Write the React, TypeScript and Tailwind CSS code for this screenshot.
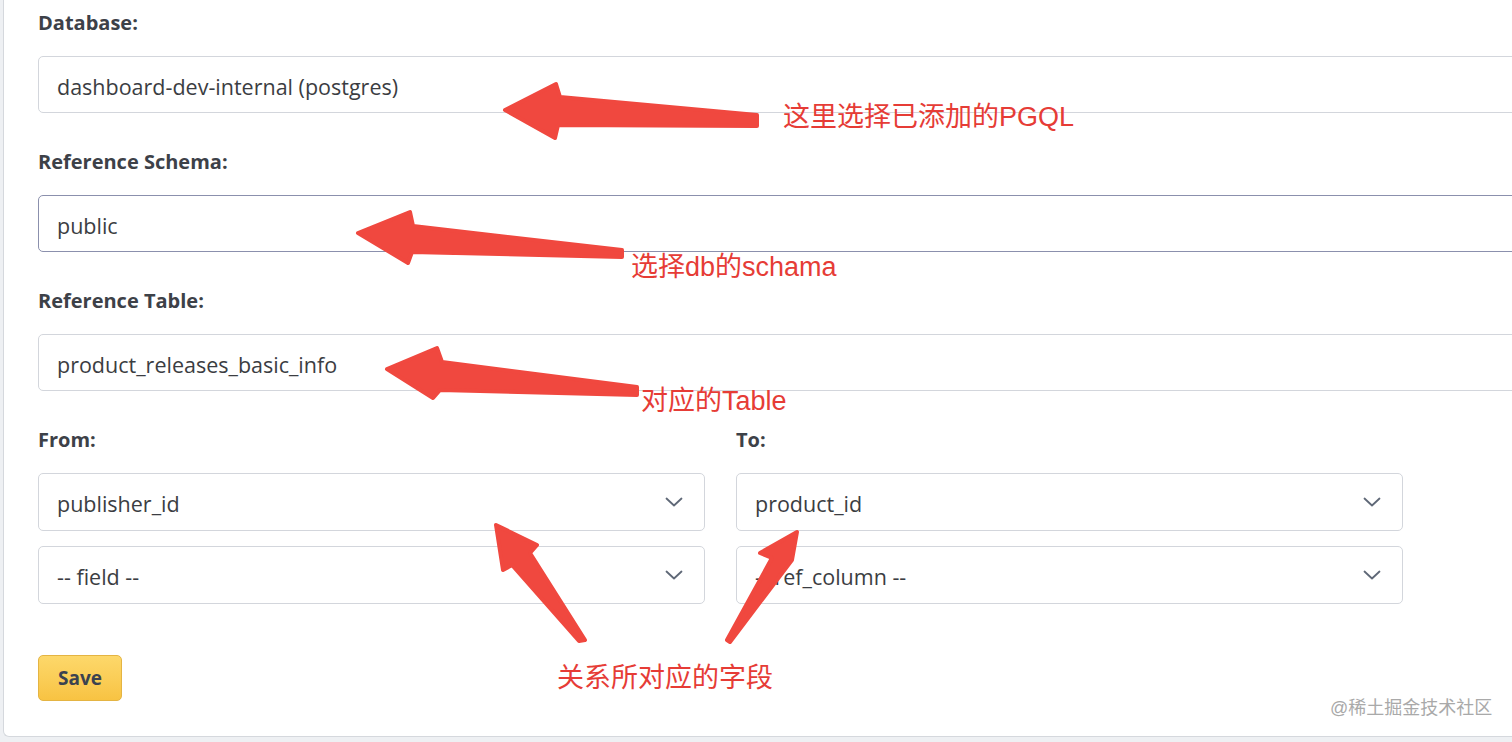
const formFont = { fontFamily: '"Open Sans", "Noto Sans", sans-serif' };

function Chevron() {
  return (
    <svg width="18" height="10" viewBox="0 0 18 10" fill="none" className="shrink-0">
      <polyline points="1.5,1.5 9,8.5 16.5,1.5" stroke="#5f6877" strokeWidth="1.8" strokeLinecap="round" strokeLinejoin="round" />
    </svg>
  );
}

function Label({ children }: { children: React.ReactNode }) {
  return <div className="h-[28px] text-[20px] leading-[28px] font-bold text-[#3d4148]">{children}</div>;
}

function TextInput({ value, focused }: { value: string; focused?: boolean }) {
  return (
    <div
      className={`mt-[19px] h-[57px] w-[1500px] rounded-[5px] bg-white flex items-center pl-[18px] pt-[5px] text-[21.5px] text-[#3b3d42] border ${
        focused ? 'border-[#8b90ad]' : 'border-[#d3d6dc]'
      }`}
    >
      {value}
    </div>
  );
}

function Select({ value }: { value: string }) {
  return (
    <div className="h-[58px] w-[667px] rounded-[5px] border border-[#d3d6dc] bg-white flex items-center justify-between pl-[18px] pr-[21px] text-[21.5px] text-[#3b3d42]">
      <span className="pt-[4px]">{value}</span>
      <Chevron />
    </div>
  );
}

const arrows = [
  '505,110 556,84 560,97 757,115 757,126 558,125 555,138',
  '358,233 410,212 413,226 622,250 622,257 412,252 408,263',
  '387,369 437,348 442,362 637,387 637,395 440,390 433,398',
  '496,525 537,545 530,553 585,640 579,641 512,565 503,570',
  '797,532 792,560 730,642 727,640 772,558 760,553',
];

const notes = [
  { text: '这里选择已添加的PGQL', left: 783, top: 104 },
  { text: '选择db的schama', left: 631, top: 254 },
  { text: '对应的Table', left: 641, top: 388 },
  { text: '关系所对应的字段', left: 557, top: 665 },
];

export default function App() {
  return (
    <div className="relative h-[742px] w-[1512px] overflow-hidden bg-[#eef0f3]" style={formFont}>
      <div className="ml-[3px] h-[737px] w-[1560px] bg-white border-l border-b border-[#d5d8dd] rounded-bl-[6px] pl-[34px] pt-[9px]">
        <Label>Database:</Label>
        <TextInput value="dashboard-dev-internal (postgres)" />

        <div className="mt-[35px]">
          <Label>Reference Schema:</Label>
          <TextInput value="public" focused />
        </div>

        <div className="mt-[35px]">
          <Label>Reference Table:</Label>
          <TextInput value="product_releases_basic_info" />
        </div>

        <div className="mt-[35px] flex gap-[31px]">
          <div>
            <Label>From:</Label>
            <div className="mt-[19px] flex flex-col gap-[15px]">
              <Select value="publisher_id" />
              <Select value="-- field --" />
            </div>
          </div>
          <div>
            <Label>To:</Label>
            <div className="mt-[19px] flex flex-col gap-[15px]">
              <Select value="product_id" />
              <Select value="-- ref_column --" />
            </div>
          </div>
        </div>

        <button className="mt-[51px] h-[46px] w-[84px] rounded-[5px] border border-[#e4b443] bg-gradient-to-b from-[#fdd86a] to-[#f8c342] text-[19px] font-bold text-[#3b4350]">
          Save
        </button>
      </div>

      {/* annotation overlay */}
      <svg className="absolute left-0 top-0 pointer-events-none" width="1512" height="742">
        {arrows.map((p, i) => (
          <polygon key={i} points={p} fill="#f0483f" stroke="#f0483f" strokeWidth="4" strokeLinejoin="round" />
        ))}
      </svg>
      {notes.map((n) => (
        <div
          key={n.text}
          className="absolute text-[27px] leading-none text-[#e63c36] whitespace-nowrap"
          style={{ left: n.left, top: n.top, fontFamily: '"Liberation Sans", "Noto Sans CJK SC", sans-serif' }}
        >
          {n.text}
        </div>
      ))}
      <div
        className="absolute left-[1330px] top-[699px] text-[18px] leading-none text-[#a9a9a9] whitespace-nowrap"
        style={{ fontFamily: '"Liberation Sans", "Noto Sans CJK SC", sans-serif' }}
      >
        @稀土掘金技术社区
      </div>
    </div>
  );
}
